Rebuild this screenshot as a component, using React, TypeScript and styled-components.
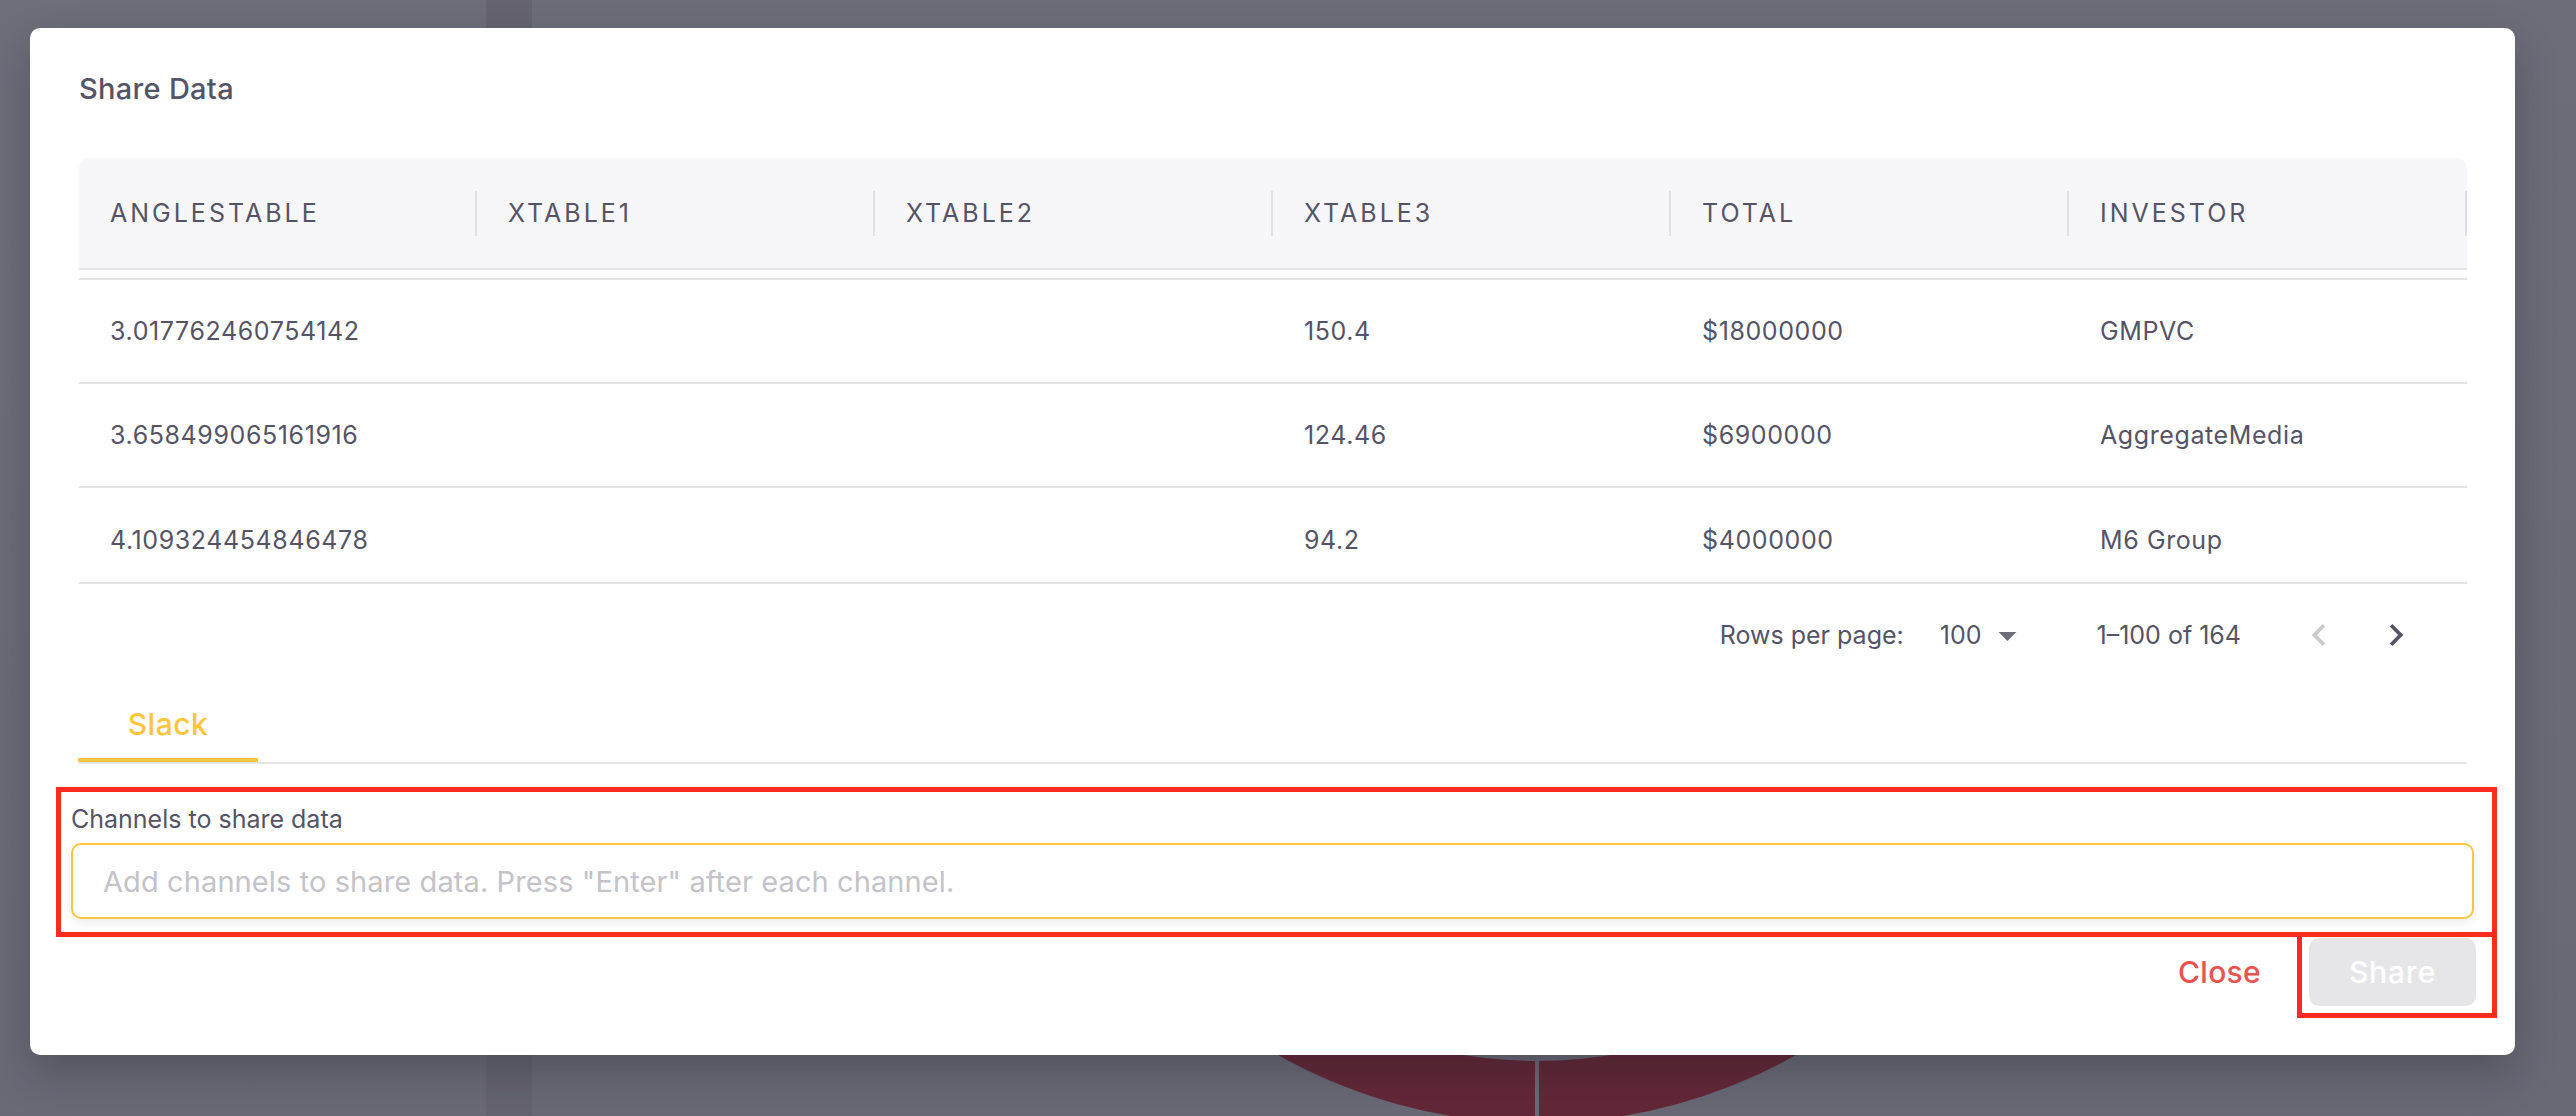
import styled, { createGlobalStyle } from "styled-components";

const GlobalStyle = createGlobalStyle`
  html, body {
    margin: 0;
    padding: 0;
  }
  body {
    font-family: Inter, "Noto Sans", sans-serif;
    background: #6b6a77;
    overflow: hidden;
  }
  * {
    box-sizing: border-box;
  }
`;

const Page = styled.div`
  position: relative;
  width: 2576px;
  height: 1116px;
  display: grid;
  grid-template-columns: 486px 46px 1fr;
  background: #6b6a77;
  overflow: hidden;
`;

const SidePanel = styled.div`
  background: linear-gradient(180deg, #6e6d7a 0%, #6a6976 100%);
`;

const Divider = styled.div`
  background: #64636f;
`;

const Main = styled.div`
  padding: 69px 0 0 478px;
  background: linear-gradient(180deg, #6d6c79 0%, #696875 100%);
`;

const Modal = styled.div`
  position: absolute;
  top: 28px;
  left: 30px;
  width: 2485px;
  display: flex;
  flex-direction: column;
  padding: 40px 48px 37px 49px;
  background: #ffffff;
  border-radius: 10px;
  box-shadow: 0 18px 40px rgba(20, 20, 30, 0.25);
  color: #545466;
`;

const Title = styled.h2`
  margin: 0 0 48px;
  font-size: 29px;
  line-height: 42px;
  font-weight: 500;
  letter-spacing: 0.3px;
  color: #545466;
`;

const HeadRow = styled.div`
  display: grid;
  grid-template-columns: repeat(6, 398px);
  align-items: center;
  height: 112px;
  background: #f7f7f9;
  border-radius: 10px 10px 0 0;
  border-bottom: 2px solid #e4e4e7;
`;

const HeadCell = styled.div`
  position: relative;
  padding-left: 31px;
  font-size: 25px;
  letter-spacing: 3px;
  text-transform: uppercase;
  color: #545466;

  &::after {
    content: "";
    position: absolute;
    right: 0;
    top: 50%;
    width: 2px;
    height: 45px;
    margin-top: -22px;
    background: #e1e1e5;
  }
`;

const Body = styled.div`
  margin-top: 8px;
  height: 306px;
  overflow: hidden;
  border-top: 2px solid #e4e4e7;
  border-bottom: 2px solid #e4e4e7;
`;

const Row = styled.div<{ $last?: boolean }>`
  display: grid;
  grid-template-columns: repeat(6, 398px);
  align-items: center;
  height: 104px;
  border-bottom: ${(p) => (p.$last ? "none" : "2px solid #e4e4e7")};
`;

const Cell = styled.div`
  padding-left: 31px;
  font-size: 25px;
  line-height: 36px;
  letter-spacing: 0.6px;
  color: #545466;
`;

const Pagination = styled.div`
  display: flex;
  align-items: center;
  justify-content: flex-end;
  height: 102px;
  font-size: 25px;
  color: #545466;
`;

const PageLabel = styled.span`
  margin-right: 36px;
`;

const PageSelect = styled.div`
  display: flex;
  align-items: center;
  gap: 5px;
  margin-right: 67px;
`;

const PageRange = styled.span`
  margin-right: 56px;
`;

const PageButton = styled.button<{ $disabled?: boolean }>`
  display: flex;
  align-items: center;
  justify-content: center;
  width: 44px;
  height: 44px;
  padding: 0;
  border: none;
  background: none;
  color: ${(p) => (p.$disabled ? "#c9c9ce" : "#545466")};
  cursor: ${(p) => (p.$disabled ? "default" : "pointer")};

  & + & {
    margin-left: 33px;
  }
  &:last-child {
    margin-right: 49px;
  }
`;

const TabBar = styled.div`
  display: flex;
  border-bottom: 2px solid #e4e4e7;
`;

const Tab = styled.div<{ $active?: boolean }>`
  display: flex;
  align-items: center;
  justify-content: center;
  width: 180px;
  height: 76px;
  margin-left: -1px;
  padding-top: 4px;
  font-size: 30px;
  font-weight: 500;
  letter-spacing: 0.5px;
  color: ${(p) => (p.$active ? "#ffc53d" : "#545466")};
  border-bottom: 4px solid ${(p) => (p.$active ? "#ffc53d" : "transparent")};
`;

const FieldMark = styled.div`
  margin: 23px -30px 0 -23px;
  padding: 9px 18px 13px 10px;
  border: 5px solid #fd2c20;
`;

const FieldLabel = styled.label`
  display: block;
  margin-bottom: 6px;
  font-size: 25px;
  line-height: 36px;
  color: #545466;
`;

const ChannelInput = styled.input`
  display: block;
  width: 100%;
  height: 76px;
  padding: 0 30px;
  border: 2px solid #ffc53d;
  border-radius: 10px;
  box-shadow: 0 4px 8px rgba(40, 40, 60, 0.08);
  font-family: inherit;
  font-size: 29px;
  letter-spacing: 0.1px;
  color: #545466;
  outline: none;

  &::placeholder {
    color: #c3c3c9;
  }
`;

const Footer = styled.div`
  display: flex;
  align-items: center;
  justify-content: flex-end;
  margin: -5px -30px 0 0;
`;

const CloseButton = styled.button`
  margin: 0 36px 6px 0;
  padding: 0;
  border: none;
  background: none;
  font-family: inherit;
  font-size: 30px;
  font-weight: 500;
  letter-spacing: 0.3px;
  color: #e8534f;
  cursor: pointer;
`;

const ShareMark = styled.div`
  padding: 1px 16px 7px 7px;
  border: 5px solid #fd2c20;
`;

const ShareButton = styled.button`
  width: 167px;
  height: 68px;
  border: none;
  border-radius: 10px;
  background: #e6e6e9;
  font-family: inherit;
  font-size: 30px;
  font-weight: 500;
  letter-spacing: 0.8px;
  color: #ffffff;
`;

const columns = ["anglestable", "xtable1", "xtable2", "xtable3", "total", "investor"];

const rows = [
  ["3.017762460754142", "", "", "150.4", "$18000000", "GMPVC"],
  ["3.658499065161916", "", "", "124.46", "$6900000", "AggregateMedia"],
  ["4.109324454846478", "", "", "94.2", "$4000000", "M6 Group"],
];

function Donut() {
  return (
    <svg width="1054" height="1054" viewBox="0 0 1054 1054">
      <circle cx="527" cy="527" r="496" fill="none" stroke="#632838" strokeWidth="62" />
      <line x1="527" y1="990" x2="527" y2="1060" stroke="#6a6976" strokeWidth="4" />
    </svg>
  );
}

function ChevronLeft() {
  return (
    <svg width="44" height="44" viewBox="0 0 24 24" fill="currentColor">
      <path d="M15.41 16.59 10.83 12l4.58-4.59L14 6l-6 6 6 6z" />
    </svg>
  );
}

function ChevronRight() {
  return (
    <svg width="44" height="44" viewBox="0 0 24 24" fill="currentColor">
      <path d="M8.59 16.59 13.17 12 8.59 7.41 10 6l6 6-6 6z" />
    </svg>
  );
}

function DropArrow() {
  return (
    <svg width="43" height="43" viewBox="0 0 24 24" fill="#6e6e7a">
      <path d="M7 10l5 5 5-5z" />
    </svg>
  );
}

export default function App() {
  return (
    <>
      <GlobalStyle />
      <Page>
        <SidePanel />
        <Divider />
        <Main>
          <Donut />
        </Main>

        <Modal>
          <Title>Share Data</Title>

          <HeadRow>
            {columns.map((c) => (
              <HeadCell key={c}>{c}</HeadCell>
            ))}
          </HeadRow>
          <Body>
            {rows.map((r, i) => (
              <Row key={i} $last={i === rows.length - 1}>
                {r.map((v, j) => (
                  <Cell key={j}>{v}</Cell>
                ))}
              </Row>
            ))}
          </Body>

          <Pagination>
            <PageLabel>Rows per page:</PageLabel>
            <PageSelect>
              <span>100</span>
              <DropArrow />
            </PageSelect>
            <PageRange>1–100 of 164</PageRange>
            <PageButton $disabled>
              <ChevronLeft />
            </PageButton>
            <PageButton>
              <ChevronRight />
            </PageButton>
          </Pagination>

          <TabBar>
            <Tab $active>Slack</Tab>
          </TabBar>

          <FieldMark>
            <FieldLabel>Channels to share data</FieldLabel>
            <ChannelInput placeholder={'Add channels to share data. Press "Enter" after each channel.'} />
          </FieldMark>

          <Footer>
            <CloseButton>Close</CloseButton>
            <ShareMark>
              <ShareButton disabled>Share</ShareButton>
            </ShareMark>
          </Footer>
        </Modal>
      </Page>
    </>
  );
}
